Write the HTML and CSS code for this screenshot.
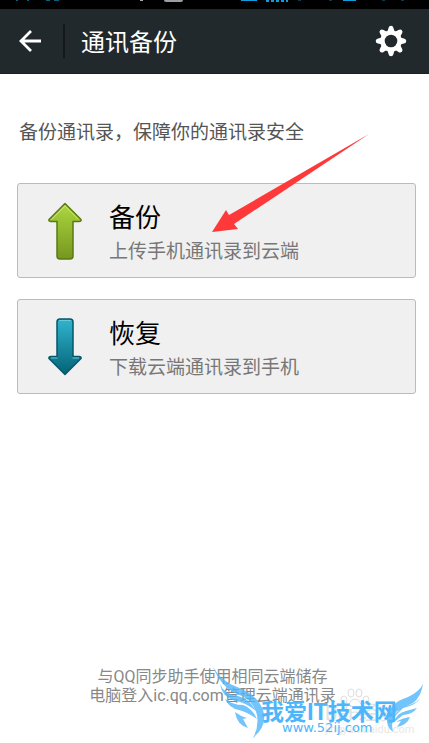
FILE: index.html
```html
<!DOCTYPE html>
<html lang="zh-CN">
<head>
  <meta charset="UTF-8">
  <meta name="viewport" content="width=device-width, initial-scale=1">
  <title>通讯备份</title>
  <link rel="stylesheet" href="styles.css">
</head>
<body>
  <div class="status-bar">
    <svg class="status-icons" viewBox="0 0 429 9" aria-hidden="true">
      <path d="M16 0h2v1h-2zM27 0h2v1h-2zM46 0h4v1h-4zM54 0h5v1h-5z" fill="#0b5f7c"/>
      <path d="M140 0h3v1h-3z" fill="#aaa"/>
      <path d="M164 0h19q0 2-2 2h-15q-2 0-2-2z" fill="#9a9fa5"/>
      <path d="M241 0h16v1h-16zM266 0h3v2h-3zM271 0h3v2h-3zM276 0h3v2h-3zM281 0h3v2h-3zM286 0h2v2h-2zM343 0h13v1h-13z" fill="#0d9ddb"/>
      <path d="M298 0h3v1h-3zM329 0h3v1h-3zM382 0h3v1h-3zM401 0h3v1h-3z" fill="#0a394b"/>
    </svg>
  </div>

  <header class="navbar">
    <button class="icon-btn back" aria-label="返回">
      <svg width="24" height="24" viewBox="0 0 24 24">
        <path d="M13 2 3 12l10 10M3 12H23" fill="none" stroke="#fff" stroke-width="2.800"/>
      </svg>
    </button>
    <h1>通讯备份</h1>
    <button class="icon-btn settings" aria-label="设置">
      <svg width="32" height="32" viewBox="-16 -16 32 32">
        <g fill="#fff">
          <circle r="10.500"/>
          <path id="tooth" d="M-4.200-9.300Q-2.800-10.500-2.500-13-2-15.300 0-15.300T2.500-13Q2.800-10.500 4.200-9.300z"/>
          <use href="#tooth" transform="rotate(45)"/>
          <use href="#tooth" transform="rotate(90)"/>
          <use href="#tooth" transform="rotate(135)"/>
          <use href="#tooth" transform="rotate(180)"/>
          <use href="#tooth" transform="rotate(225)"/>
          <use href="#tooth" transform="rotate(270)"/>
          <use href="#tooth" transform="rotate(315)"/>
        </g>
        <circle r="6.300" fill="#22292c"/>
      </svg>
    </button>
  </header>

  <main>
    <p class="intro">备份通讯录，保障你的通讯录安全</p>

    <div class="actions">
      <button class="action-card">
        <svg class="arrow" width="34" height="58" viewBox="0 0 34 58">
          <defs>
            <linearGradient id="green" x1="0" y1="0" x2="0" y2="1">
              <stop offset="0" stop-color="#acd840"/>
              <stop offset="1" stop-color="#76961f"/>
            </linearGradient>
          </defs>
          <path d="M17 1.500 33 17.500Q33.500 19.500 31 19.500H25V54Q25 57 22 57H12Q9 57 9 54V19.500H3Q.5 19.500 1 17.500z" fill="url(#green)" stroke="#597a12" stroke-width="1.500" stroke-linejoin="round"/>
          <path d="M3.500 17.500 17 4 30.500 17.500" fill="none" stroke="#c6e873"/>
        </svg>
        <span class="action-text">
          <span class="action-title">备份</span>
          <span class="action-desc">上传手机通讯录到云端</span>
        </span>
      </button>

      <button class="action-card">
        <svg class="arrow" width="34" height="58" viewBox="0 0 34 58">
          <defs>
            <linearGradient id="teal" x1="0" y1="0" x2="0" y2="1">
              <stop offset="0" stop-color="#31b5cf"/>
              <stop offset="1" stop-color="#036276"/>
            </linearGradient>
          </defs>
          <path d="M17 56.500 33 40.500Q33.500 38.500 31 38.500H25V4Q25 1 22 1H12Q9 1 9 4V38.500H3Q.5 38.500 1 40.500z" fill="url(#teal)" stroke="#06566a" stroke-width="1.500" stroke-linejoin="round"/>
          <path d="M11 2.500H23M3 40H9.500M24.500 40H31" fill="none" stroke="#65c9da"/>
        </svg>
        <span class="action-text">
          <span class="action-title">恢复</span>
          <span class="action-desc">下载云端通讯录到手机</span>
        </span>
      </button>

      <!-- red pointer lying over the first card -->
      <svg class="pointer" width="158" height="100" viewBox="0 0 158 100" aria-hidden="true">
        <path d="M157 0 17 81 14 76 0 98 26 95 22 90z" fill="#ff3939"/>
      </svg>
    </div>
  </main>

  <footer>
    <p>与QQ同步助手使用相同云端储存<br>电脑登入ic.qq.com管理云端通讯录</p>

    <div class="watermark">
      <svg class="paw" width="30" height="26" viewBox="0 0 30 26" aria-hidden="true">
        <g fill="#fff" stroke="#ddd">
          <ellipse cx="4" cy="12" rx="3" ry="4"/>
          <ellipse cx="11" cy="5" rx="3" ry="4"/>
          <ellipse cx="19" cy="5" rx="3" ry="4"/>
          <ellipse cx="26" cy="12" rx="3" ry="4"/>
          <path d="M15 11Q19 11 21 16 26 20 22 24 19 25 15 24 11 25 8 24 4 20 9 16 11 11 15 11z"/>
        </g>
      </svg>
      <span class="baidu">Bai 经验</span>
      <span class="baidu-url">jingyan.baidu.com</span>
      <svg class="wings" width="216" height="78" viewBox="0 0 216 78" aria-hidden="true">
        <g fill="#4db5fb" fill-opacity=".8">
          <path d="M0 2Q8 16 24 22 44 29 50 45 55 60 40 73 46 62 44 50 40 34 24 29 8 22 0 2z"/>
          <path d="M7 19Q11 29 25 31 36 33 43 46 32 37 22 36 9 32 7 19z"/>
          <path d="M12 34Q20 40 30 40 39 43 44 54 34 47 26 45 16 43 12 34z"/>
          <path d="M22 47Q27 51 34 53L30 54 35 63Q24 60 22 47z"/>
          <path d="M210 19Q206 27 195 32 176 38 174 53 173 62 180 67 177 55 183 47 190 42 200 38 208 32 210 19z"/>
          <path d="M208 32Q204 40 190 43L181 52Q186 42 196 40 204 38 208 32z"/>
          <path d="M204 43Q200 49 190 50L181 57Q184 48 193 46z"/>
          <path d="M197 52Q194 60 184 62L188 56 183 57Q189 53 197 52z"/>
        </g>
      </svg>
      <span class="wm-name">我爱IT技术网</span>
      <span class="wm-url">www.52ij.com</span>
    </div>
  </footer>
</body>
</html>
```

FILE: styles.css
```css
* {
  box-sizing: border-box;
}

body {
  margin: 0;
  min-height: 100vh;
  display: flex;
  flex-direction: column;
  font-family: "Noto Sans CJK SC", sans-serif;
  background: #fff;
  color: #555;
}

h1, p {
  margin: 0;
  font-weight: normal;
}

button {
  font-family: inherit;
  cursor: pointer;
}

.status-bar {
  height: 9px;
  background: #000;
  overflow: hidden;
}

.status-icons {
  display: block;
  width: 100%;
}

.navbar {
  display: flex;
  align-items: center;
  height: 65px;
  padding-right: 22px;
  background: #22292c;
  border-bottom: 1px solid #1b2123;
}

.navbar h1 {
  flex: 1;
  padding-left: 16px;
  color: #fff;
  font-size: 24px;
  line-height: 32px;
}

.icon-btn {
  display: flex;
  align-items: center;
  padding: 0;
  border: none;
  background: none;
}

.back {
  height: 34px;
  width: 65px;
  padding-left: 18px;
  border-right: 2px solid #15191b;
}

main {
  padding: 43px 13px 0 17px;
}

.intro {
  padding-left: 2px;
  font-size: 19px;
  line-height: 28px;
}

.actions {
  position: relative;
  display: flex;
  flex-direction: column;
  gap: 21px;
  margin-top: 38px;
}

.action-card {
  display: flex;
  align-items: center;
  gap: 27px;
  width: 100%;
  height: 95px;
  padding: 0 30px;
  border: 1px solid #bbb;
  border-radius: 3px;
  background: #f0f0f0;
  text-align: left;
}

.action-text {
  display: flex;
  flex-direction: column;
}

.action-title {
  color: #000;
  font-size: 26px;
  line-height: 38px;
}

.action-desc {
  color: #777;
  font-size: 19px;
  line-height: 30px;
}

.pointer {
  position: absolute;
  top: -49px;
  left: 195px;
  pointer-events: none;
}

footer {
  position: relative;
  margin-top: auto;
  padding: 0 4px 38px 0;
  color: #888;
  font-family: Roboto, "Noto Sans CJK SC", sans-serif;
  font-size: 16px;
  line-height: 19px;
  text-align: center;
}

.watermark {
  position: absolute;
  right: 0;
  bottom: 0;
  width: 216px;
  height: 78px;
  white-space: nowrap;
  color: #4db5fb;
}

.wings {
  position: absolute;
  top: 0;
  left: 0;
}

.wm-name {
  position: absolute;
  top: 35px;
  left: 48px;
  font-size: 23px;
  font-weight: bold;
  line-height: 26px;
}

.wm-url {
  position: absolute;
  top: 55px;
  left: 69px;
  font-family: "DejaVu Sans", sans-serif;
  font-size: 13px;
  line-height: 16px;
}

.paw {
  position: absolute;
  top: 23px;
  left: 127px;
}

.baidu {
  position: absolute;
  top: 36px;
  left: 112px;
  color: #e2e2e2;
  font-size: 20px;
  line-height: 24px;
}

.baidu-url {
  position: absolute;
  top: 58px;
  left: 112px;
  color: #e8e8e8;
  font-size: 11px;
  line-height: 14px;
}
```
